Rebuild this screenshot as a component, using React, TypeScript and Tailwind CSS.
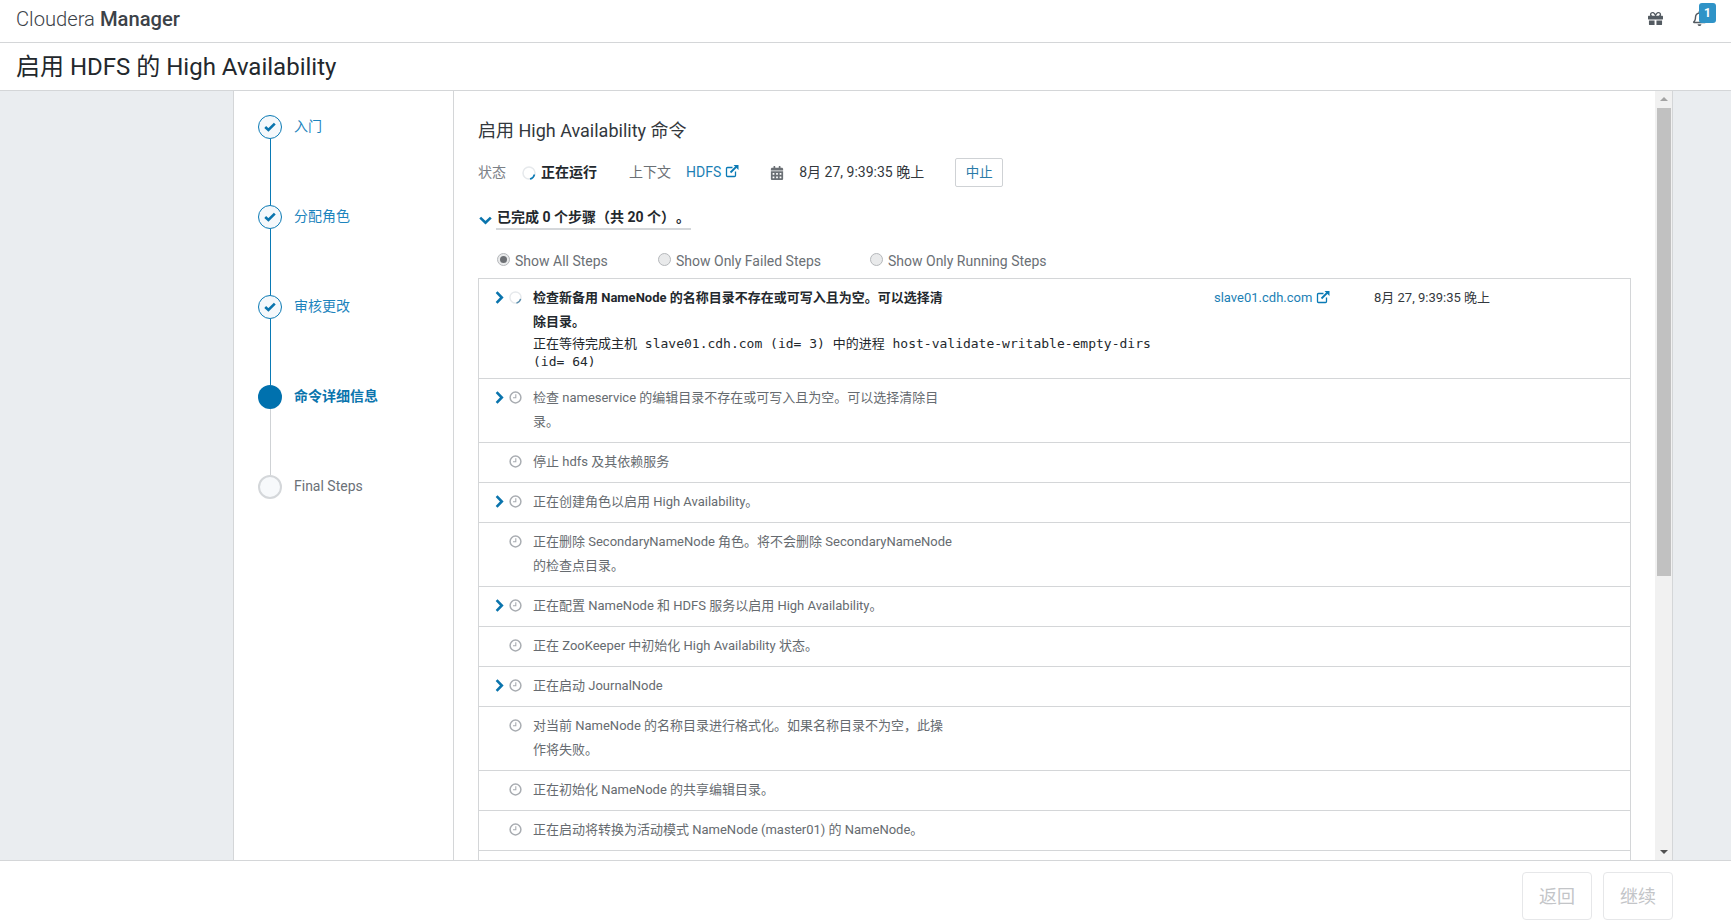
import React from "react";
import { FaGift, FaRegBell, FaCalendarAlt } from "react-icons/fa";

const font = "[font-family:Roboto,'Noto_Sans_CJK_SC',sans-serif]";

function ExtLink() {
  return (
    <svg width="14" height="14" viewBox="0 0 14 14" className="inline-block ml-1 -mt-1 text-[#0a7ab5]" fill="none" stroke="currentColor">
      <path d="M10.5 7.5v4a1 1 0 0 1-1 1h-7a1 1 0 0 1-1-1v-7a1 1 0 0 1 1-1h5" strokeWidth="1.3" />
      <path d="M5.5 8.5 12 2" strokeWidth="1.8" />
      <path d="M8.5 1h5v5z" fill="currentColor" stroke="none" />
    </svg>
  );
}

function ChevronRight() {
  return (
    <svg width="9" height="13" viewBox="0 0 9 13" fill="none" stroke="#0a74ad" strokeWidth="2.6">
      <path d="M1.6 1.2 6.8 6.5 1.6 11.8" />
    </svg>
  );
}

function ChevronDown() {
  return (
    <svg width="13" height="9" viewBox="0 0 13 9" fill="none" stroke="#0a74ad" strokeWidth="2.6">
      <path d="M1.2 1.6 6.5 6.8 11.8 1.6" />
    </svg>
  );
}

function Check() {
  return (
    <svg width="12" height="10" viewBox="0 0 12 10" fill="none" stroke="#0a74ad" strokeWidth="2.6">
      <path d="M1.2 5 4.4 8 10.8 1.6" />
    </svg>
  );
}

function Clock() {
  return (
    <svg width="13" height="13" viewBox="0 0 13 13" fill="none" stroke="#a9adb2" className="shrink-0">
      <circle cx="6.5" cy="6.5" r="5.4" strokeWidth="1.5" />
      <path d="M6.8 3.2v3.5H4" strokeWidth="1.1" />
    </svg>
  );
}

function Spinner({ size = 14, color = "#0a7ab5" }: { size?: number; color?: string }) {
  return (
    <svg width={size} height={size} viewBox="0 0 14 14" fill="none" className="shrink-0">
      <circle cx="7" cy="7" r="6" stroke="#e6e9ec" strokeWidth="1.5" />
      <path d="M12.5 8.5A6 6 0 0 1 8 13" stroke={color} strokeWidth="1.5" />
    </svg>
  );
}

function Step({ label, state, last }: { label: string; state: "done" | "active" | "todo"; last?: boolean }) {
  return (
    <div className="flex h-[90px] relative">
      <div className="w-6 flex flex-col items-center">
        {state === "done" && (
          <div className="w-6 h-6 rounded-full border border-[#0a7ab5] bg-[#f5f8fb] flex items-center justify-center shrink-0">
            <Check />
          </div>
        )}
        {state === "active" && <div className="w-6 h-6 rounded-full bg-[#0071ae] shrink-0" />}
        {state === "todo" && <div className="w-6 h-6 rounded-full border-2 border-[#d4d7da] bg-[#f7f9fb] shrink-0" />}
        {!last && <div className={`w-px flex-1 ${state === "done" ? "bg-[#0a7ab5]" : "bg-[#cfd2d5]"}`} />}
      </div>
      <div
        className={`ml-[12px] -mt-px h-6 leading-6 text-sm ${
          state === "done" ? "text-[#1c84bd]" : state === "active" ? "text-[#0a74ad] font-bold" : "text-[#6b7178]"
        }`}
      >
        {label}
      </div>
    </div>
  );
}

function Row({ text, arrow, h }: { text: React.ReactNode; arrow?: boolean; h: number }) {
  return (
    <div className="flex border-b border-[#d4d6d8] pt-[6px] pl-[16px] shrink-0" style={{ height: h }}>
      <div className="w-[10px] h-6 flex items-center shrink-0">{arrow && <ChevronRight />}</div>
      <div className="w-[24px] h-6 flex items-center justify-center shrink-0 -ml-[2px]">
        <Clock />
      </div>
      <div className="ml-[6px] mt-px w-[420px] text-[13px] leading-6 text-[#666b70]">{text}</div>
    </div>
  );
}

function Radio({ label, checked, w }: { label: string; checked?: boolean; w: number }) {
  return (
    <div className="flex items-center shrink-0" style={{ width: w }}>
      <span className="w-[13px] h-[13px] rounded-full border border-[#b5b8bb] bg-[#e9eaeb] flex items-center justify-center -mt-1 shrink-0">
        {checked && <span className="w-[7px] h-[7px] rounded-full bg-[#6d7074]" />}
      </span>
      <span className="ml-[5px] text-sm text-[#6b7075]">{label}</span>
    </div>
  );
}

export default function App() {
  const mono = "font-['DejaVu_Sans_Mono','Noto_Sans_CJK_SC',monospace]";
  return (
    <div className={`h-[923px] w-[1731px] flex flex-col overflow-hidden bg-white ${font}`}>
      <header className="h-[43px] shrink-0 border-b border-[#d4d6d8] flex items-center justify-between pl-[16px] pr-[24px]">
        <div className="text-[20.2px] leading-none -mt-1 text-[#3c4248]">
          <span className="font-light">Cloudera</span> <span className="font-medium">Manager</span>
        </div>
        <div className="flex items-center -mt-[5px]">
          <FaGift className="text-[#545b62] text-[15px]" />
          <div className="relative ml-[29px] w-[15px] h-[15px]">
            <FaRegBell className="text-[#545b62] text-[15px]" />
            <span className="absolute -top-[8px] left-[7px] w-[17px] h-[20px] rounded-[3px] bg-[#2f93c7] text-white text-[12px] font-bold leading-[20px] text-center">
              1
            </span>
          </div>
        </div>
      </header>
      <div className="h-[48px] shrink-0 border-b border-[#d4d6d8] flex items-center pl-[16px] pt-[1px] text-[24px] text-[#23282d]">
        启用 HDFS 的 High Availability
      </div>
      <main className="flex-1 min-h-0 flex bg-[#eaedf0]">
        <div className="w-[233px] shrink-0" />
        <nav className="w-[221px] shrink-0 bg-white border-l border-r border-[#d4d6d8] pl-[24px] pt-[24px]">
          <Step label="入门" state="done" />
          <Step label="分配角色" state="done" />
          <Step label="审核更改" state="done" />
          <Step label="命令详细信息" state="active" />
          <Step label="Final Steps" state="todo" last />
        </nav>
        <section className="w-[1201px] shrink-0 bg-white pl-[24px] overflow-hidden">
          <h2 className="text-[18px] leading-6 mt-[28px] text-[#33383d] font-normal">启用 High Availability 命令</h2>
          <div className="flex items-center mt-[15px] h-[29px] text-sm">
            <span className="-mt-[2px] text-[#7b8086]">状态</span>
            <span className="ml-[16px]"><Spinner /></span>
            <span className="-mt-[2px] ml-[5px] font-bold text-[#23282d]">正在运行</span>
            <span className="-mt-[2px] ml-[32px] text-[#6b7075]">上下文</span>
            <span className="-mt-[2px] ml-[15px] text-[#1c7fb5]">HDFS<ExtLink /></span>
            <FaCalendarAlt className="ml-[31px] text-[#6b7075] text-[14px]" />
            <span className="-mt-[2px] ml-[15px] text-[#33383d]">8月 27, 9:39:35 晚上</span>
            <button className="ml-[31px] w-[48px] h-[29px] border border-[#cfd2d5] rounded-[2px] text-[#2a7ba8] text-[13.5px]">中止</button>
          </div>
          <div className="flex items-center mt-[20px] h-[23px]">
            <span className="mt-1 ml-[1px] flex"><ChevronDown /></span>
            <span className="ml-[4px] px-[1px] h-[23px] leading-[21px] text-sm font-bold text-[#23282d] border-b-2 border-[#d4d7da]">
              已完成 0 个步骤（共 20 个）<span className="ml-[8px]">。</span>
            </span>
          </div>
          <div className="flex items-center mt-[19px] h-[24px] ml-[19px]">
            <Radio label="Show All Steps" checked w={161} />
            <Radio label="Show Only Failed Steps" w={212} />
            <Radio label="Show Only Running Steps" w={200} />
          </div>
          <div className="mt-[5px] w-[1153px] border-l border-r border-t border-[#d4d6d8] flex flex-col h-[700px]">
            <div className="flex border-b border-[#d4d6d8] pt-[6px] pl-[16px] h-[100px] shrink-0 relative">
              <div className="w-[10px] h-6 flex items-center shrink-0">
                <ChevronRight />
              </div>
              <div className="w-[24px] h-6 flex items-center justify-center shrink-0 -ml-[2px]">
                <Spinner size={13} color="#5b8fae" />
              </div>
              <div className="ml-[6px] mt-px w-[620px] text-[13px] leading-6 text-[#23282d]">
                <div className="w-[420px] font-bold">检查新备用 NameNode 的名称目录不存在或可写入且为空。可以选择清除目录。</div>
                <div className={`w-[620px] leading-[18px] mt-[1px] ${mono} text-[13px]`}>
                  <span className={font}>正在等待完成主机</span> slave01.cdh.com (id= 3) <span className={font}>中的进程</span> host-validate-writable-empty-dirs (id= 64)
                </div>
              </div>
              <span className="absolute left-[735px] top-[7px] leading-6 text-[13px] text-[#1c7fb5]">slave01.cdh.com<ExtLink /></span>
              <span className="absolute left-[895px] top-[7px] leading-6 text-[13px] text-[#33383d]">8月 27, 9:39:35 晚上</span>
            </div>
            <Row h={64} arrow text="检查 nameservice 的编辑目录不存在或可写入且为空。可以选择清除目录。" />
            <Row h={40} text="停止 hdfs 及其依赖服务" />
            <Row h={40} arrow text="正在创建角色以启用 High Availability。" />
            <Row h={64} text="正在删除 SecondaryNameNode 角色。将不会删除 SecondaryNameNode 的检查点目录。" />
            <Row h={40} arrow text="正在配置 NameNode 和 HDFS 服务以启用 High Availability。" />
            <Row h={40} text="正在 ZooKeeper 中初始化 High Availability 状态。" />
            <Row h={40} arrow text="正在启动 JournalNode" />
            <Row h={64} text="对当前 NameNode 的名称目录进行格式化。如果名称目录不为空，此操作将失败。" />
            <Row h={40} text="正在初始化 NameNode 的共享编辑目录。" />
            <Row h={40} text="正在启动将转换为活动模式 NameNode (master01) 的 NameNode。" />
          </div>
        </section>
        <div className="w-[17px] shrink-0 bg-[#f1f1f1] border-r border-[#d4d6d8] box-content flex flex-col items-center">
          <div className="mt-[6px] w-0 h-0 border-l-[4px] border-r-[4px] border-b-[4px] border-l-transparent border-r-transparent border-b-[#a3a3a3]" />
          <div className="mt-[7px] w-[14px] h-[468px] bg-[#c1c1c1]" />
          <div className="mt-auto mb-[6px] w-0 h-0 border-l-[4px] border-r-[4px] border-t-[4px] border-l-transparent border-r-transparent border-t-[#505050]" />
        </div>
        <div className="flex-1" />
      </main>
      <footer className="h-[63px] shrink-0 border-t border-[#d4d6d8] bg-white flex items-start justify-end pt-[11px] pr-[58px] gap-[11px]">
        <button className="w-[70px] h-[48px] border border-[#e6e7e9] rounded-[4px] text-[18px] text-[#c3c5c8]">返回</button>
        <button className="w-[70px] h-[48px] border border-[#e6e7e9] rounded-[4px] text-[18px] text-[#c3c5c8]">继续</button>
      </footer>
    </div>
  );
}
